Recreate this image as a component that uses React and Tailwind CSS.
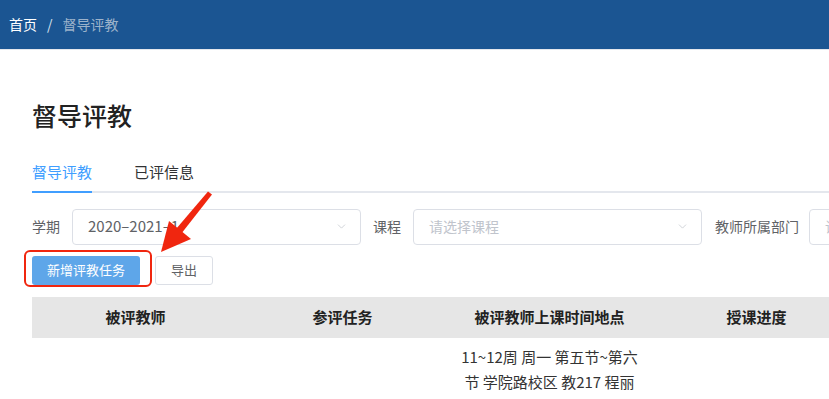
import { ChevronDown } from 'lucide-react'

const font = { fontFamily: '"Noto Sans CJK SC", "Noto Sans", sans-serif' }

function Select({ value, placeholder, width }) {
  return (
    <div className={`flex h-[36px] shrink-0 items-center justify-between rounded border border-[#dcdfe6] bg-white pl-[15px] pr-[12px] ${width}`}>
      {value ? (
        <span className="text-[15px] text-[#606266]">{value}</span>
      ) : (
        <span className="text-[14px] text-[#c0c4cc]">{placeholder}</span>
      )}
      <ChevronDown size={13} strokeWidth={1.2} className="text-[#b8bcc4]" />
    </div>
  )
}

export default function App() {
  return (
    <div className="relative h-[399px] w-[829px] overflow-hidden bg-white" style={font}>
      {/* Top bar */}
      <div className="flex h-[50px] items-center border-b border-[#e4e7ed] bg-[#1b5592] pl-[9px] text-[14px]">
        <span className="text-white">首页</span>
        <span className="mx-[10px] text-[#d8e2ee]">/</span>
        <span className="text-[#9db3cb]">督导评教</span>
      </div>

      <div className="pl-[32px]">
        <h1 className="mt-[49px] text-[25px] font-medium leading-[32px] text-[#222]">督导评教</h1>

        {/* Tabs */}
        <div className="mt-[30px] flex border-b-2 border-[#e4e7ed] text-[15px]">
          <div className="relative -mb-[2px] border-b-2 border-[#409eff] pb-[7px] text-[#409eff]">督导评教</div>
          <div className="ml-[42px] pb-[7px] text-[#303133]">已评信息</div>
        </div>

        {/* Filters */}
        <div className="mt-[16px] flex items-center overflow-hidden text-[14px] text-[#606266]">
          <span className="w-[40px] shrink-0">学期</span>
          <Select value="2020–2021–1" width="w-[289px]" />
          <span className="ml-[12px] w-[40px] shrink-0">课程</span>
          <Select placeholder="请选择课程" width="w-[289px]" />
          <span className="ml-[13px] w-[94px] shrink-0">教师所属部门</span>
          <Select placeholder="请" width="w-[100px]" />
        </div>

        {/* Buttons */}
        <div className="mt-[11px] flex items-center gap-[15px] text-[13px]">
          <button className="h-[29px] w-[108px] rounded-[3px] bg-[#5ea6e9] text-white">新增评教任务</button>
          <button className="h-[29px] w-[58px] rounded-[3px] border border-[#dcdfe6] bg-white text-[#606266]">导出</button>
        </div>

        {/* Table */}
        <div className="mt-[12px] grid grid-cols-[207px_207px_207px_207px]">
          <div className="flex h-[41px] items-center justify-center bg-[#e6e6e6] text-[15px] font-bold text-[#222]">被评教师</div>
          <div className="flex h-[41px] items-center justify-center bg-[#e6e6e6] text-[15px] font-bold text-[#222]">参评任务</div>
          <div className="flex h-[41px] items-center justify-center bg-[#e6e6e6] text-[15px] font-bold text-[#222]">被评教师上课时间地点</div>
          <div className="flex h-[41px] items-center justify-center bg-[#e6e6e6] text-[15px] font-bold text-[#222]">授课进度</div>

          <div />
          <div />
          <div className="flex justify-center pt-[6px]">
            <p className="w-[184px] text-center text-[15px] leading-[25px] text-[#333]">11~12周 周一 第五节~第六节 学院路校区 教217 程丽</p>
          </div>
          <div />
        </div>
      </div>

      {/* Annotation: red box and arrow */}
      <div className="absolute left-[24px] top-[250px] h-[37px] w-[128px] rounded-[6px] border-[2.5px] border-[#f0260f]" />
      <svg className="absolute left-0 top-0" width="829" height="399" viewBox="0 0 829 399">
        <path d="M208 191.5 L212 194.5 L181 234 L176 229 Z" fill="#f0260f" />
        <path d="M161 252 L169 221 L191 239 Z" fill="#f0260f" />
      </svg>
    </div>
  )
}
